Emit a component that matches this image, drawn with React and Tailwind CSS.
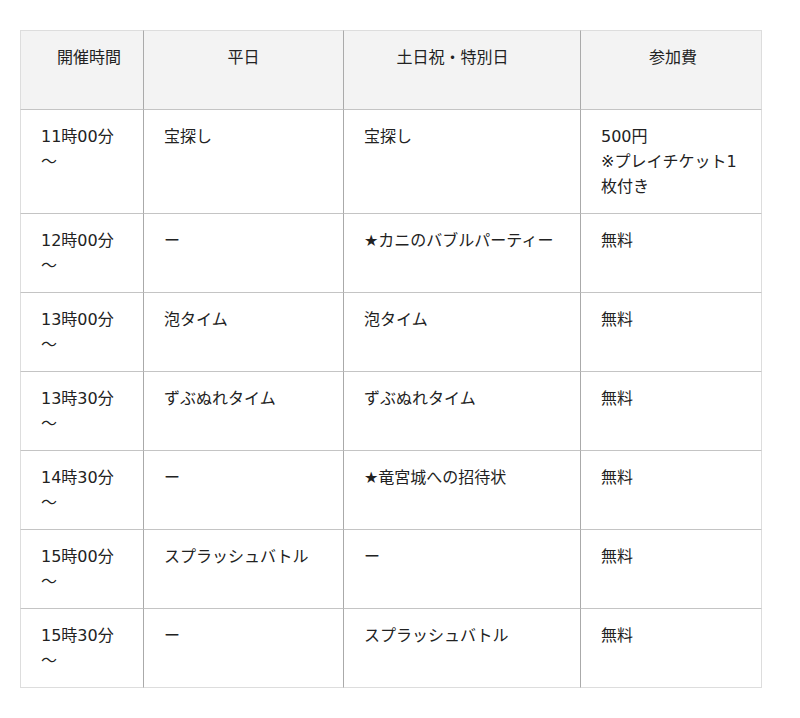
const rows = [
  { time: '11時00分', weekday: '宝探し', holiday: '宝探し', fee: ['500円', '※プレイチケット1', '枚付き'] },
  { time: '12時00分', weekday: 'ー', holiday: '★カニのバブルパーティー', fee: ['無料'] },
  { time: '13時00分', weekday: '泡タイム', holiday: '泡タイム', fee: ['無料'] },
  { time: '13時30分', weekday: 'ずぶぬれタイム', holiday: 'ずぶぬれタイム', fee: ['無料'] },
  { time: '14時30分', weekday: 'ー', holiday: '★竜宮城への招待状', fee: ['無料'] },
  { time: '15時00分', weekday: 'スプラッシュバトル', holiday: 'ー', fee: ['無料'] },
  { time: '15時30分', weekday: 'ー', holiday: 'スプラッシュバトル', fee: ['無料'] },
]

export default function App() {
  return (
    <div
      className="min-h-screen bg-white pt-[30px] px-5 text-[16px] leading-[25px] text-[#222]"
      style={{ fontFamily: '"DejaVu Sans", "Noto Sans CJK JP", sans-serif' }}
    >
      <table className="w-[742px] table-fixed border-separate border-spacing-0">
        <colgroup>
          <col className="w-[124px]" />
          <col className="w-[200px]" />
          <col className="w-[237px]" />
          <col className="w-[181px]" />
        </colgroup>
        <thead>
          <tr className="bg-[#f3f3f3]">
            <th className="border-t border-l border-b border-r border-t-[#ddd] border-l-[#ddd] border-b-[#c4c4c4] border-r-[#aaa] pt-[14px] pb-[39px] pl-[14px] text-center align-top font-normal">
              開催時間
            </th>
            <th className="border-t border-b border-r border-t-[#ddd] border-b-[#c4c4c4] border-r-[#aaa] pt-[14px] pb-[39px] text-center align-top font-normal">
              平日
            </th>
            <th className="border-t border-b border-r border-t-[#ddd] border-b-[#c4c4c4] border-r-[#aaa] pt-[14px] pb-[39px] pr-[19px] text-center align-top font-normal">
              土日祝・特別日
            </th>
            <th className="border-t border-b border-r border-t-[#ddd] border-b-[#c4c4c4] border-r-[#ddd] pt-[14px] pb-[39px] pl-[4px] text-center align-top font-normal">
              参加費
            </th>
          </tr>
        </thead>
        <tbody>
          {rows.map((r, i) => {
            const last = i === rows.length - 1
            const bottom = last ? 'border-b-[#ddd]' : 'border-b-[#c4c4c4]'
            return (
              <tr key={i}>
                <td className={`border-l border-b border-r border-l-[#ddd] ${bottom} border-r-[#aaa] py-[14px] pl-5 pr-2 align-top`}>
                  <span className="block">{r.time}</span>
                  <span className="block">〜</span>
                </td>
                <td className={`border-b border-r ${bottom} border-r-[#aaa] py-[14px] pl-[20px] pr-2 align-top`}>
                  {r.weekday}
                </td>
                <td className={`border-b border-r ${bottom} border-r-[#aaa] py-[14px] pl-[20px] pr-2 align-top`}>
                  {r.holiday}
                </td>
                <td className={`border-b border-r ${bottom} border-r-[#ddd] py-[14px] pl-[20px] pr-2 align-top`}>
                  {r.fee.map((f, j) => (
                    <span key={j} className="block whitespace-nowrap">{f}</span>
                  ))}
                </td>
              </tr>
            )
          })}
        </tbody>
      </table>
    </div>
  )
}
